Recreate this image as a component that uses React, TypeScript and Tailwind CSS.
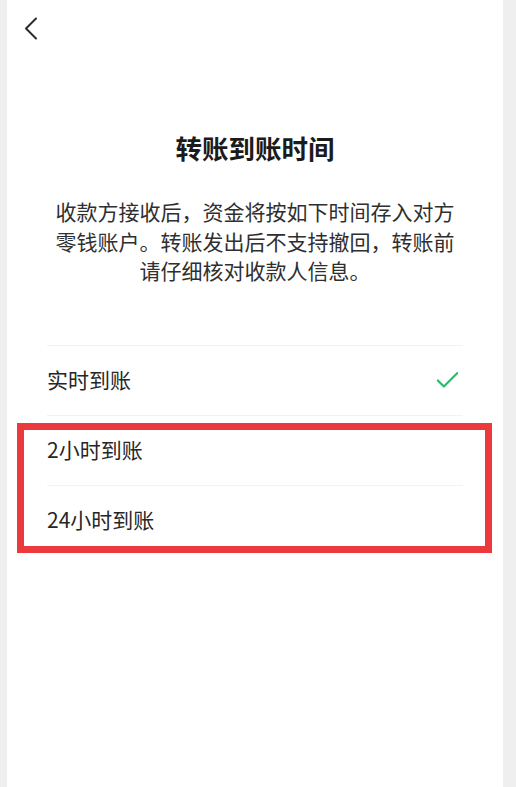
import { Check } from "lucide-react";

const options = [
  { label: "实时到账", checked: true },
  { label: "2小时到账", checked: false },
  { label: "24小时到账", checked: false },
];

function BackIcon() {
  return (
    <svg width="14" height="23" viewBox="0 0 14 23" fill="none">
      <path d="M12 1.5 L2 11.5 L12 21.5" stroke="#2b2b2b" strokeWidth="2" strokeLinecap="round" strokeLinejoin="round" />
    </svg>
  );
}

export default function App() {
  return (
    <main
      className="relative flex h-[787px] w-full overflow-hidden bg-[#efefef] pl-[7px]"
      style={{ fontFamily: '"Noto Sans CJK SC", "Noto Sans", sans-serif' }}
    >
      <div className="flex w-[496px] flex-col bg-white">
        <div className="h-[57px] pl-[17px] pt-[17px]">
          <BackIcon />
        </div>

        <h1 className="mt-[73px] text-center text-[26.5px] font-semibold leading-[36px] text-[#1b1b1b]">
          转账到账时间
        </h1>

        <p className="mt-[31px] text-center text-[21px] leading-[29.5px] text-[#2f2f2f]">
          <span className="block">收款方接收后，资金将按如下时间存入对方</span>
          <span className="block">零钱账户。转账发出后不支持撤回，转账前</span>
          <span className="block">请仔细核对收款人信息。</span>
        </p>

        <ul className="mt-[59px] px-10">
          {options.map((o) => (
            <li
              key={o.label}
              className="flex h-[70px] items-center justify-between border-t border-[#f2f2f2] text-[21px] text-[#262626]"
            >
              <span>{o.label}</span>
              {o.checked && <Check size={29} strokeWidth={1.8} className="mr-[1px] text-[#2db86a]" />}
            </li>
          ))}
        </ul>
      </div>

      {/* annotation box */}
      <div className="absolute left-[17px] top-[423px] h-[130px] w-[475px] border-[7px] border-[#ec393d]" />
    </main>
  );
}
